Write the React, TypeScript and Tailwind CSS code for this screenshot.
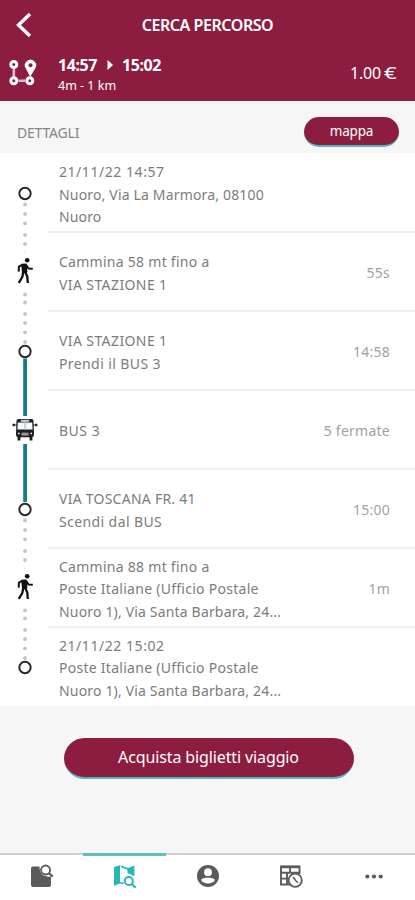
import React from "react";

type RailKind = "start" | "walk" | "board" | "bus" | "alight" | "end";

function Stop() {
  return <circle cx="25" cy="40.5" r="5.7" fill="#fff" stroke="#262626" strokeWidth="1.9" />;
}

function Dots({ ys }: { ys: number[] }) {
  return (
    <>
      {ys.map((y) => (
        <circle key={y} cx="25" cy={y} r="1.9" fill="#c4c4c4" />
      ))}
    </>
  );
}

function Walker() {
  return (
    <g fill="none" stroke="#111" strokeLinejoin="round">
      <circle cx="27.2" cy="28.3" r="2.3" fill="#111" stroke="none" />
      <path d="M22 32.6 L26 32.4 L26.6 40 L22.8 40.4 Z" fill="#111" strokeWidth="1.6" />
      <path d="M22.6 32.6 L18.9 34.6 L18.7 39.6" strokeWidth="2" />
      <path d="M26.2 33 L28.4 36.4 L32.8 36.7" strokeWidth="2" />
      <path d="M23.2 40.2 L22.3 45 L18.8 50.8" strokeWidth="2.3" />
      <path d="M25.2 40 L27.3 44.6 L27.8 51" strokeWidth="2.3" />
    </g>
  );
}

function Bus() {
  return (
    <g>
      <path d="M18.5 29 H31.5 Q33.5 29 33.5 31 L34 44 Q34 47.3 31.5 47.3 H18.5 Q16 47.3 16 44 L16.5 31 Q16.5 29 18.5 29Z" fill="#1c1c1c" />
      <path d="M17.8 32.6 H32.2 L32.6 39.4 H17.4Z" fill="#f4f7f8" />
      <path d="M20.8 29.8 h8.4 v2 h-8.4Z" fill="#c5d5da" />
      <path d="M24.2 31.8 h1.6 v7.6 h-1.6Z" fill="#b8ccd2" />
      <path d="M21.5 42.6 h7 v3 h-7Z" fill="#999" />
      <circle cx="18.8" cy="43.4" r="1" fill="#ddd" />
      <circle cx="31.2" cy="43.4" r="1" fill="#ddd" />
      <path d="M17.6 47 h2.8 v3.4 h-2.8Z M29.6 47 h2.8 v3.4 h-2.8Z M12.6 33.7 h2.2 v2.6 h-2.2Z M35.2 33.7 h2.2 v2.6 h-2.2Z" fill="#1c1c1c" />
      <path d="M14 35 h3 M33 35 h3" stroke="#1c1c1c" strokeWidth="1" />
    </g>
  );
}

function Rail({ kind }: { kind: RailKind }) {
  const teal = "#167c8c";
  return (
    <svg width="48" height="79" viewBox="0 0 48 79" className="shrink-0">
      {(kind === "start" || kind === "alight") && <Dots ys={[51.5, 61, 70.3]} />}
      {(kind === "board" || kind === "end") && <Dots ys={[3, 12, 21.3, 31]} />}
      {kind === "walk" && <Dots ys={[3, 12, 62.5, 70.5]} />}
      {kind === "walk" && <circle cx="25" cy="20.5" r="1" fill="#ececec" />}
      {kind === "board" && <path d="M23.2 47.5 h3.8 V79 h-3.8Z" fill={teal} />}
      {kind === "alight" && <path d="M23.2 0 h3.8 V33 h-3.8Z" fill={teal} />}
      {kind === "bus" && <path d="M23.2 0 h3.8 V26 h-3.8Z M23.2 54 h3.8 V79 h-3.8Z" fill={teal} />}
      {kind === "walk" && <Walker />}
      {kind === "bus" && <Bus />}
      {kind !== "walk" && kind !== "bus" && <Stop />}
    </svg>
  );
}

interface Step {
  kind: RailKind;
  lines: { text: string; track: string }[];
  side?: string;
}

const steps: Step[] = [
  {
    kind: "start",
    lines: [
      { text: "21/11/22 14:57", track: "tracking-[0.55px]" },
      { text: "Nuoro, Via La Marmora, 08100", track: "tracking-[0.17px]" },
      { text: "Nuoro", track: "tracking-[0.15px]" },
    ],
  },
  {
    kind: "walk",
    lines: [
      { text: "Cammina 58 mt fino a", track: "tracking-[0.27px]" },
      { text: "VIA STAZIONE 1", track: "tracking-[0.4px]" },
    ],
    side: "55s",
  },
  {
    kind: "board",
    lines: [
      { text: "VIA STAZIONE 1", track: "tracking-[0.4px]" },
      { text: "Prendi il BUS 3", track: "tracking-[0.4px]" },
    ],
    side: "14:58",
  },
  { kind: "bus", lines: [{ text: "BUS 3", track: "tracking-[0.5px]" }], side: "5 fermate" },
  {
    kind: "alight",
    lines: [
      { text: "VIA TOSCANA FR. 41", track: "tracking-[0.25px]" },
      { text: "Scendi dal BUS", track: "tracking-[0.4px]" },
    ],
    side: "15:00",
  },
  {
    kind: "walk",
    lines: [
      { text: "Cammina 88 mt fino a", track: "tracking-[0.27px]" },
      { text: "Poste Italiane (Ufficio Postale", track: "tracking-[0.27px]" },
      { text: "Nuoro 1), Via Santa Barbara, 24...", track: "tracking-[0.17px]" },
    ],
    side: "1m",
  },
  {
    kind: "end",
    lines: [
      { text: "21/11/22 15:02", track: "tracking-[0.55px]" },
      { text: "Poste Italiane (Ufficio Postale", track: "tracking-[0.27px]" },
      { text: "Nuoro 1), Via Santa Barbara, 24...", track: "tracking-[0.17px]" },
    ],
  },
];

function Header() {
  return (
    <header className="h-[101px] bg-[#8c1d40] text-white">
      <div className="grid h-[49px] grid-cols-[48px_1fr_48px] items-center">
        <svg width="48" height="49" viewBox="0 0 48 49" fill="none" stroke="#fff" strokeWidth="3.4">
          <path d="M30 14 L18.5 25 L30 36" />
        </svg>
        <h1 className="text-center text-[16px] leading-[20px] font-semibold tracking-[-0.45px] whitespace-nowrap">CERCA PERCORSO</h1>
      </div>
      <div className="flex h-[52px]">
        <svg width="58" height="52" viewBox="0 0 58 52" fill="none" stroke="#fff" className="shrink-0">
          <g strokeWidth="3">
            <circle cx="13.8" cy="15.5" r="3" />
            <circle cx="13.8" cy="31.8" r="3" />
            <circle cx="29.8" cy="31.8" r="3" />
          </g>
          <path d="M13.8 20 V28 M18.5 31.8 H25" strokeWidth="2.6" strokeOpacity=".7" />
          <path d="M30.2 28 L25.9 19.6 A5.6 5.6 0 1 1 35.1 19.6Z" fill="#fff" stroke="none" />
          <circle cx="30.5" cy="16.3" r="2" fill="#8c1d40" stroke="none" />
        </svg>
        <div className="flex grow flex-col pt-[5px]">
          <div className="flex items-center text-[16px] leading-[22px] font-bold tracking-[-0.4px]">
            <span className="w-[40px]">14:57</span>
            <svg width="24" height="12" viewBox="0 0 24 12">
              <path d="M9.5 1 L15 6 L9.5 11Z" fill="#fff" />
            </svg>
            <span>15:02</span>
          </div>
          <div className="text-[12.5px] leading-[20px]">4m - 1 km</div>
        </div>
        <div className="flex gap-[3px] pt-[14px] pr-[18px] text-[16px] leading-[20px] whitespace-nowrap">
          <span className="tracking-[-0.2px]">1.00</span>
          <span className="inline-block w-[13px] origin-left scale-x-[1.38]">€</span>
        </div>
      </div>
    </header>
  );
}

function TabBar() {
  return (
    <nav className="grid h-[47px] grid-cols-5 border-t-2 border-[#cfcfcf] bg-white">
      <div className="flex justify-center pt-[9px]">
        <svg width="24" height="24" viewBox="0 0 24 24">
          <path d="M1 4.5 Q1 2.5 3 2.5 H9.5 Q9.5 9 13.5 11.5 Q17 13 21 12.5 V21 Q21 23 19 23 H3 Q1 23 1 21Z" fill="#595b5d" />
          <circle cx="15.6" cy="6" r="4.5" fill="#fff" stroke="#595b5d" strokeWidth="1.9" />
          <path d="M18.8 9.2 L22.8 12.7" stroke="#595b5d" strokeWidth="2.2" />
        </svg>
      </div>
      <div className="-mt-[2px] flex justify-center border-t-3 border-[#5cc1bf] pt-[8px]">
        <svg width="24" height="24" viewBox="0 0 24 24">
          <path d="M1 3 L7 1.3 V19.5 L1 21.8Z" fill="#26b8b8" />
          <path d="M7 1.3 L15 4 L21.4 1.4 V12.4 L14.6 9 L14.2 5.6 L8.8 3.8Z" fill="#26b8b8" />
          <path d="M7 18.5 L10.5 19.8" stroke="#26b8b8" strokeWidth="1.5" />
          <circle cx="15.8" cy="17" r="4.1" fill="#fff" stroke="#26b8b8" strokeWidth="2" />
          <path d="M18.7 20 L22.6 23.7" stroke="#26b8b8" strokeWidth="2.2" />
        </svg>
      </div>
      <div className="flex justify-center pt-[9px]">
        <svg width="24" height="24" viewBox="0 0 24 24">
          <circle cx="12" cy="12" r="11" fill="#595b5d" />
          <circle cx="12" cy="8.2" r="3.9" fill="#fff" />
          <path d="M4.9 15.8 Q7.5 13.6 12 13.6 T19.1 15.8 Q17 19.6 12 19.6 T4.9 15.8Z" fill="#fff" />
        </svg>
      </div>
      <div className="flex justify-center pt-[9px]">
        <svg width="24" height="24" viewBox="0 0 24 24" fill="none" stroke="#595b5d" strokeWidth="1.9">
          <path d="M20.5 10 V2.5 H2 V20.5 H12" />
          <path d="M2 3 H20.5" strokeWidth="2.4" />
          <path d="M2 8.8 H20.5 M2 14.6 H11 M8 9 V20 M11 3 V9" />
          <circle cx="16.2" cy="16.3" r="6.6" fill="#fff" strokeWidth="1.8" />
          <path d="M14 13 L16.6 16.5 L19 18.8" strokeWidth="1.5" />
        </svg>
      </div>
      <div className="flex justify-center pt-[9px]">
        <svg width="24" height="24" viewBox="0 0 24 24" fill="#595b5d">
          <circle cx="5.3" cy="12.5" r="2.1" />
          <circle cx="12" cy="12.5" r="2.1" />
          <circle cx="18.7" cy="12.5" r="2.1" />
        </svg>
      </div>
    </nav>
  );
}

export default function App() {
  return (
    <div className="flex h-[900px] w-[415px] flex-col overflow-hidden bg-[#f6f6f6] font-['Noto_Sans',sans-serif]">
      <Header />
      <div className="flex h-[52px] items-center justify-between pt-[10px] pr-[16px] pl-[17px]">
        <span className="text-[14px] tracking-[-0.2px] text-[#858585]">DETTAGLI</span>
        <button className="h-[30px] w-[95px] rounded-full border-b-2 border-[#4fb9bd] bg-[#8c1d40] pt-px text-[13.5px] leading-none tracking-[-0.2px] text-white">mappa</button>
      </div>
      <main className="bg-white">
        {steps.map((s, i) => (
          <section key={i} className="flex h-[79px]">
            <Rail kind={s.kind} />
            <div className={`flex min-w-0 grow items-center justify-between pr-[25px] pl-[11px] ${i > 0 ? "-mt-px border-t-2 border-[#eeeeee] pt-[3px]" : "pt-[5px]"}`}>
              <div className="text-[14px] leading-[22.5px] whitespace-nowrap text-[#7c7c7c]">
                {s.lines.map((l, j) => (
                  <div key={j} className={l.track}>{l.text}</div>
                ))}
              </div>
              {s.side && <span className="-mt-[2px] text-[14px] tracking-[0.25px] whitespace-nowrap text-[#a2a2a2]">{s.side}</span>}
            </div>
          </section>
        ))}
      </main>
      <div className="flex grow justify-center border-t border-[#f0f0f0] pt-[31px] pl-[2px]">
        <button className="h-[41px] w-[290px] rounded-full border-b-2 border-[#4fb9bd] bg-[#8c1d40] pb-[2px] text-[16px] leading-none tracking-[-0.12px] text-white">Acquista biglietti viaggio</button>
      </div>
      <TabBar />
    </div>
  );
}
